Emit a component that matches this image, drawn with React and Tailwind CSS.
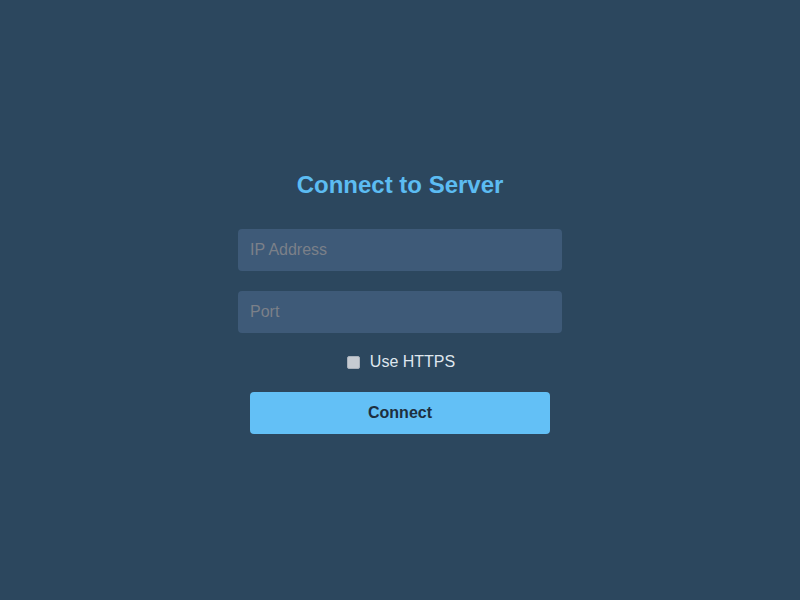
export default function App() {
  return (
    <main
      className="flex min-h-screen items-center justify-center bg-[#2c475e] pt-[6px]"
      style={{ fontFamily: '"Liberation Sans", Arial, sans-serif' }}
    >
      <form className="flex w-[324px] flex-col items-center" onSubmit={(e) => e.preventDefault()}>
        <h2 className="h-[25px] text-[24px] font-bold leading-[25px] text-[#5cbcf2]">Connect to Server</h2>
        <input
          type="text"
          placeholder="IP Address"
          className="mt-[32px] h-[42px] w-full rounded-[4px] bg-[#3e5a78] px-3 text-base text-white outline-none placeholder:text-[#7b8089]"
        />
        <input
          type="text"
          placeholder="Port"
          className="mt-[20px] h-[42px] w-full rounded-[4px] bg-[#3e5a78] px-3 text-base text-white outline-none placeholder:text-[#7b8089]"
        />
        <label className="mt-[19px] flex h-[20px] items-center gap-[10px] pl-[2px] text-base text-[#dfe6ee]">
          <input
            type="checkbox"
            className="h-[13px] w-[13px] appearance-none rounded-[2px] border border-[#a9b1bb] bg-[#c6cbd2]"
          />
          Use HTTPS
        </label>
        <button
          type="submit"
          className="mt-[20px] h-[42px] w-[300px] rounded-[4px] bg-[#63c0f6] text-base font-bold text-[#1d2f40]"
        >
          Connect
        </button>
      </form>
    </main>
  );
}
